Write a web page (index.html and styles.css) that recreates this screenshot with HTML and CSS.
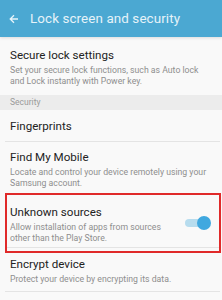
FILE: index.html
```html
<!DOCTYPE html>
<html>
<head>
<meta charset="utf-8">
<link rel="stylesheet" href="styles.css">
</head>
<body>
<div class="appbar">
  <svg class="back" width="10" height="10" viewBox="0 0 10 10"><path d="M9 5H1.5M5 1.2L1.2 5L5 8.8" fill="none" stroke="#e8f4fa" stroke-width="1.3"/></svg>
  <span class="apptitle">Lock screen and security</span>
</div>
<div class="list">
  <div class="item first">
    <div class="title">Secure lock settings</div>
    <div class="sub">Set your secure lock functions, such as Auto lock and Lock instantly with Power key.</div>
  </div>
  <div class="section">Security</div>
  <div class="item single">
    <div class="title">Fingerprints</div>
  </div>
  <div class="divider"></div>
  <div class="item fmm">
    <div class="title">Find My Mobile</div>
    <div class="sub">Locate and control your device remotely using your Samsung account.</div>
  </div>
  <div class="highlight">
    <div class="row">
      <div class="text">
        <div class="title">Unknown sources</div>
        <div class="sub">Allow installation of apps from sources other than the Play Store.</div>
      </div>
      <div class="switch"><div class="track"></div><div class="knob"></div></div>
    </div>
    <div class="divider inbox"></div>
  </div>
  <div class="item enc">
    <div class="title">Encrypt device</div>
    <div class="sub">Protect your device by encrypting its data.</div>
  </div>
  <div class="divider"></div>
  <div class="item last">
    <div class="title">Encrypt SD card</div>
  </div>
</div>
</body>
</html>
```
FILE: styles.css
```css
html, body {
  margin: 0;
  padding: 0;
  background: #f9f9f9;
  font-family: Roboto, "Noto Sans", sans-serif;
  overflow: hidden;
}
.appbar {
  height: 37px;
  background: #4ba8d2;
  display: flex;
  align-items: center;
  padding-left: 9px;
  box-shadow: 0 1px 3px rgba(0,0,0,0.12);
}
.back {
  margin-top: 1px;
}
.apptitle {
  margin-left: 11px;
  color: #e6f3f9;
  font-size: 13.4px;
  letter-spacing: 0.1px;
}
.item {
  padding: 0 10px;
}
.title {
  font-size: 11.6px;
  line-height: 15px;
  color: #222;
}
.sub {
  font-size: 8.7px;
  line-height: 10.5px;
  color: #8e8e8e;
  margin-top: 2px;
}
.item.first {
  padding-top: 11px;
  padding-bottom: 9px;
}
.section {
  height: 15px;
  line-height: 15px;
  background: #ececec;
  color: #9a9a9a;
  font-size: 8.5px;
  padding-left: 10px;
}
.item.single {
  padding-top: 9px;
  padding-bottom: 7px;
}
.divider {
  height: 1px;
  background: #e4e4e4;
  margin: 0 2px 0 5px;
}
.item.fmm {
  padding-top: 8px;
  padding-bottom: 5px;
}
.highlight {
  margin: 0 1px 0 5px;
  border: 2px solid #e02a2a;
  height: 56px;
}
.row {
  display: flex;
  align-items: center;
  padding: 10px 0 0 3px;
}
.text {
  flex: 1;
  padding-right: 16px;
}
.switch {
  position: relative;
  width: 26px;
  height: 14px;
  margin-right: 8px;
  margin-top: -2px;
}
.track {
  position: absolute;
  left: 0;
  top: 3px;
  width: 22px;
  height: 8px;
  border-radius: 4px;
  background: #b7dcee;
}
.knob {
  position: absolute;
  right: 0;
  top: 0;
  width: 14px;
  height: 14px;
  border-radius: 50%;
  background: #40a8df;
}
.divider.inbox {
  margin: 4px 0 0 0;
}
.item.enc {
  padding-top: 4px;
  padding-bottom: 6px;
}
.item.last {
  padding-top: 9px;
}
```
